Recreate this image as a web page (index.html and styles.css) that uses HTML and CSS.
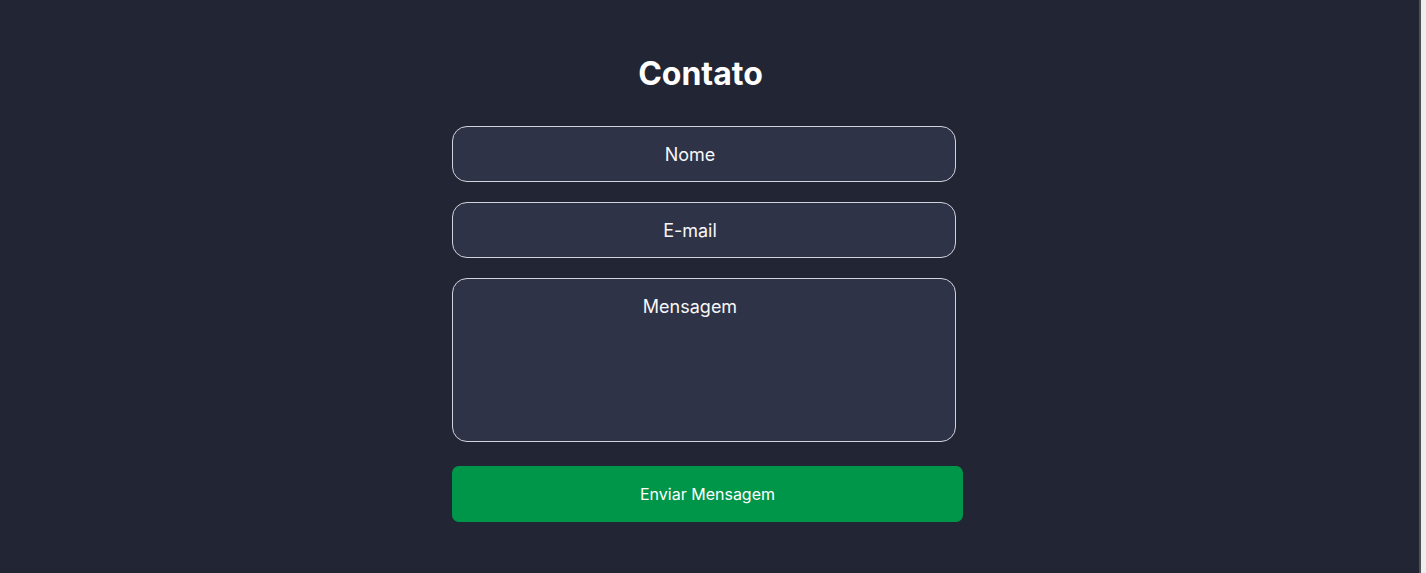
FILE: index.html
```html
<!DOCTYPE html>
<html lang="pt">
<head>
<meta charset="utf-8">
<title>Contato</title>
<link rel="stylesheet" href="styles.css">
</head>
<body>
<div class="page">
  <main class="main">
    <section class="contact">
      <h1 class="title">Contato</h1>
      <form class="form">
        <input class="field" type="text" placeholder="Nome">
        <input class="field" type="email" placeholder="E-mail">
        <textarea class="field area" placeholder="Mensagem"></textarea>
        <button class="submit" type="button">Enviar Mensagem</button>
      </form>
    </section>
  </main>
  <div class="scroll"><div class="scroll-edge"></div><div class="scroll-track"></div></div>
</div>
</body>
</html>
```

FILE: styles.css
```css
html, body {
  margin: 0;
  padding: 0;
  height: 100%;
  overflow: hidden;
}
body {
  font-family: Inter, "Noto Sans", sans-serif;
  background: #222533;
  color: #ffffff;
}
.page {
  display: flex;
  height: 100%;
}
.main {
  flex: 1;
  background: #222533;
  padding: 54px 4px 0 0;
  box-sizing: border-box;
}
.contact {
  width: 511px;
  margin: 0 auto;
}
.title {
  margin: 0 14px 32px 0;
  font-size: 32px;
  line-height: 40px;
  font-weight: 700;
  text-align: center;
  color: #ffffff;
}
.form {
  display: flex;
  flex-direction: column;
  align-items: flex-start;
}
.field {
  box-sizing: border-box;
  width: 504px;
  height: 56px;
  margin: 0 0 20px 0;
  padding: 0 38px 0 10px;
  background: #2e3348;
  border: 1px solid #d2d3da;
  border-radius: 15px;
  color: #ffffff;
  font-family: Inter, "Noto Sans", sans-serif;
  font-size: 18px;
  text-align: center;
  outline: none;
}
.field::placeholder {
  color: #f7f7f9;
  opacity: 1;
}
.area {
  height: 164px;
  margin-bottom: 24px;
  padding-top: 17px;
  line-height: 22px;
  resize: none;
  display: block;
}
.submit {
  width: 511px;
  height: 56px;
  border: none;
  border-radius: 7px;
  background: #00964a;
  color: #ffffff;
  font-family: Inter, "Noto Sans", sans-serif;
  font-size: 16px;
  cursor: pointer;
}
.scroll {
  width: 7px;
  display: flex;
}
.scroll-edge {
  width: 2px;
  background: #4e4f52;
}
.scroll-track {
  flex: 1;
  background: #eeeeee;
}
```
